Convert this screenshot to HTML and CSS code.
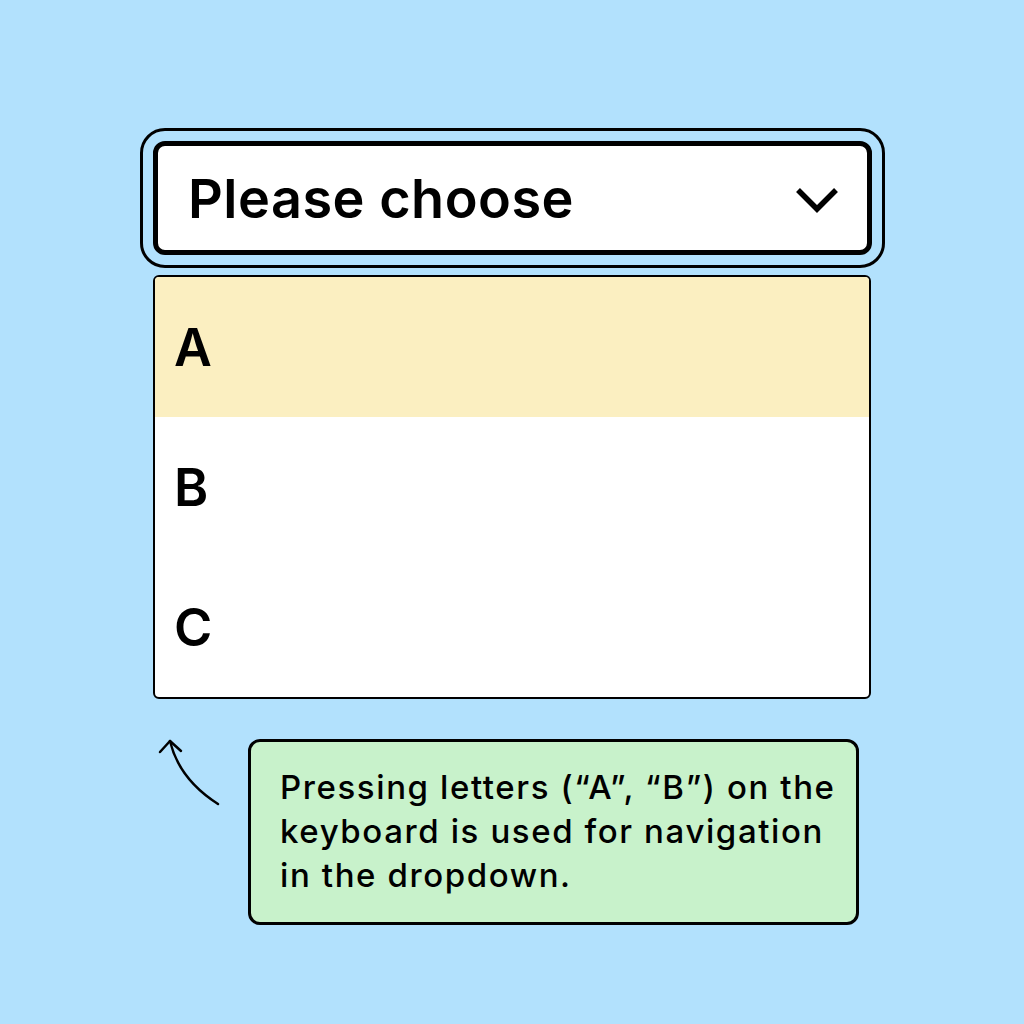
FILE: index.html
```html
<!DOCTYPE html>
<html lang="en">
<head>
  <meta charset="UTF-8" />
  <title>Dropdown keyboard navigation</title>
  <link rel="stylesheet" href="styles.css">
</head>
<body>

  <main class="stage">
    <div class="select">
      <span class="select-label">Please choose</span>
      <svg class="chevron" width="44" height="28" viewBox="0 0 44 28">
        <path d="M3 4 L22 23 L41 4" fill="none" stroke="#000" stroke-width="5.5" />
      </svg>
    </div>

    <ul class="options">
      <li class="option active">A</li>
      <li class="option">B</li>
      <li class="option">C</li>
    </ul>

    <div class="hint-row">
      <!-- Arrow pointing up at the list -->
      <svg class="hint-arrow" width="95" height="70" viewBox="0 0 95 70">
        <path d="M65 65 Q26 40 17 2" fill="none" stroke="#000" stroke-width="2.5" stroke-linecap="round" />
        <path d="M7 13 L17 2 L28 12" fill="none" stroke="#000" stroke-width="2.5" stroke-linecap="round" stroke-linejoin="round" />
      </svg>
      <div class="hint">
        Pressing letters (“A”, “B”) on the keyboard is used for navigation in the dropdown.
      </div>
    </div>
  </main>

</body>
</html>
```

FILE: styles.css
```css
* { box-sizing: border-box; margin: 0; padding: 0; }

body {
  font-family: Inter, 'Noto Sans', sans-serif;
  background: #b2e1fd;
  color: #000;
  width: 1024px;
  height: 1024px;
}

.stage {
  padding: 141px 0 0 153px;
}

/* Select box with focus ring */
.select {
  width: 719px;
  height: 114px;
  background: white;
  border: 5px solid #000;
  border-radius: 12px;
  outline: 3px solid #000;
  outline-offset: 10px;
  display: flex;
  align-items: center;
  justify-content: space-between;
  padding: 0 28px 0 30px;
}

.select-label {
  font-size: 54px;
  font-weight: 600;
  letter-spacing: 0.5px;
}

.chevron { margin-top: 4px; }

/* Open list */
.options {
  list-style: none;
  width: 718px;
  margin-top: 20px;
  background: white;
  border: 2px solid #000;
  border-radius: 6px;
  overflow: hidden;
}

.option {
  height: 140px;
  display: flex;
  align-items: center;
  padding-left: 19px;
  font-size: 52px;
  font-weight: 600;
}

.option.active { background: #fbefc1; }

/* Hint note */
.hint-row {
  display: flex;
  margin-top: 40px;
}

.hint-arrow { flex-shrink: 0; }

.hint {
  width: 611px;
  height: 186px;
  background: #c8f2cb;
  border: 3px solid #000;
  border-radius: 12px;
  padding: 23px 10px 0 29px;
  font-size: 33px;
  font-weight: 500;
  letter-spacing: 1.6px;
  line-height: 44px;
}
```
